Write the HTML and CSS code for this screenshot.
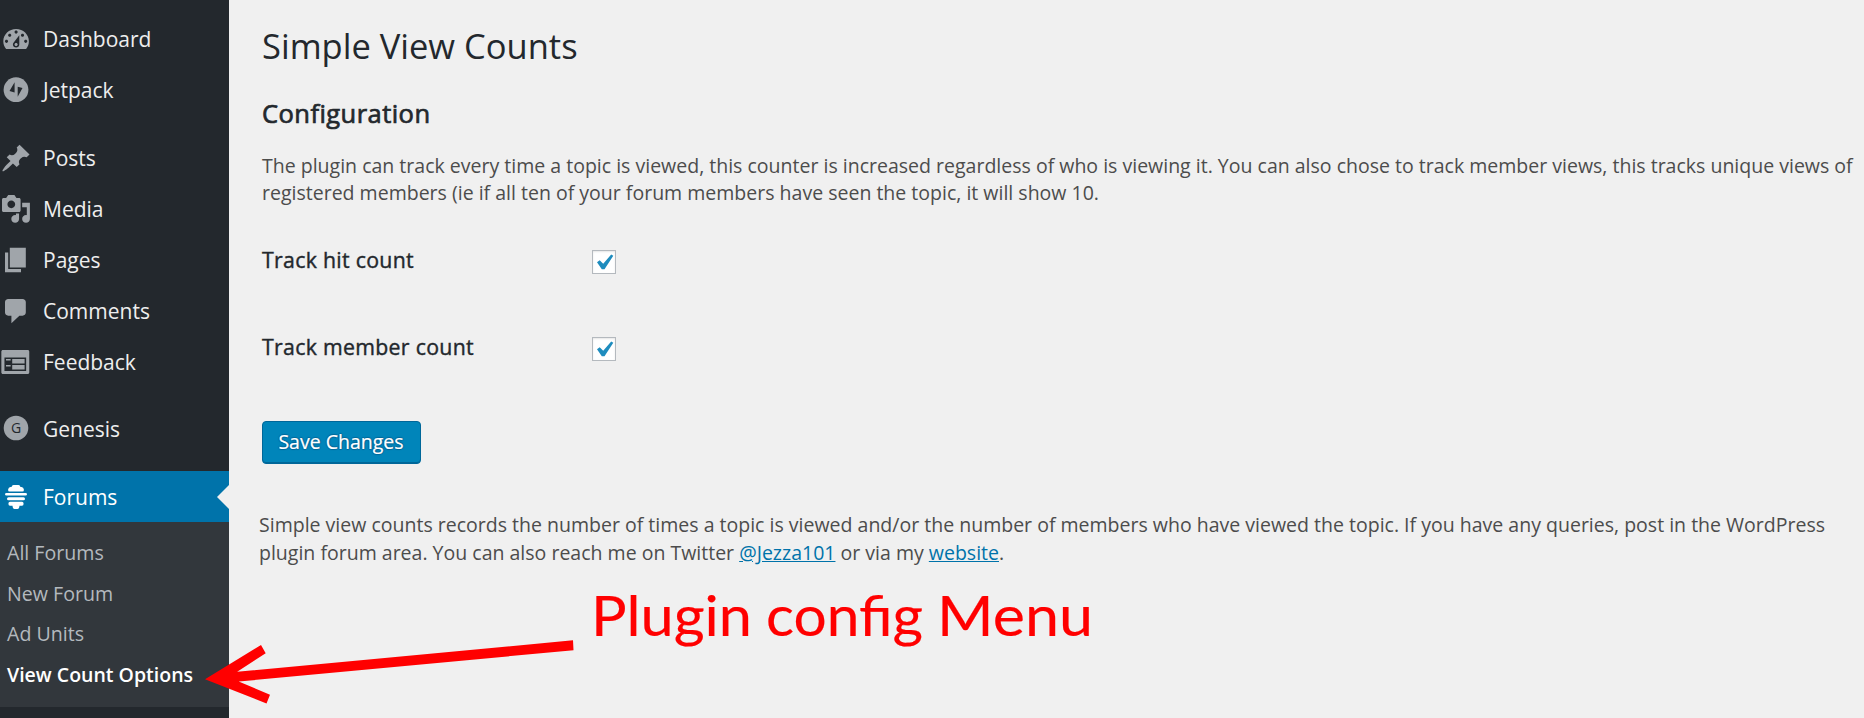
FILE: index.html
```html
<!DOCTYPE html>
<html lang="en">
<head>
<meta charset="utf-8">
<title>Simple View Counts</title>
<link rel="stylesheet" href="styles.css">
</head>
<body>
<div class="layout">
  <nav class="sidebar">
    <ul class="menu">
      <li class="item"><svg class="icon" viewBox="0 0 34 51"><path fill-rule="evenodd" transform="translate(.1 11.4) scale(1.6 1.54)" d="M3.76 16h12.48c1.1-1.37 1.76-3.11 1.76-5 0-4.42-3.58-8-8-8s-8 3.58-8 8c0 1.89.66 3.63 1.76 5zM10 4c.55 0 1 .45 1 1s-.45 1-1 1-1-.45-1-1 .45-1 1-1zM6 6c.55 0 1 .45 1 1s-.45 1-1 1-1-.45-1-1 .45-1 1-1zm8 0c.55 0 1 .45 1 1s-.45 1-1 1-1-.45-1-1 .45-1 1-1zm-5.37 5.55L12 7v6c0 1.1-.9 2-2 2s-2-.9-2-2c0-.57.24-1.08.63-1.45zM4 10c.55 0 1 .45 1 1s-.45 1-1 1-1-.45-1-1 .45-1 1-1zm12 0c.55 0 1 .45 1 1s-.45 1-1 1-1-.45-1-1 .45-1 1-1zm-5 3c0-.55-.45-1-1-1s-1 .45-1 1 .45 1 1 1 1-.45 1-1z"/></svg><span>Dashboard</span></li>
      <li class="item"><svg class="icon" viewBox="0 0 34 51"><circle cx="16" cy="25.7" r="12.4"/><path class="cut" d="M14.6 18.3v10.2l-5.1-1.6zM17.7 22.8l4.8 1.2-4.8 8.8z"/></svg><span>Jetpack</span></li>
      <li class="separator"></li>
      <li class="item"><svg class="icon" viewBox="0 0 34 51"><path transform="translate(.3 10.9) scale(1.57 1.54)" d="M10.44 3.02l1.82-1.82 6.36 6.35-1.83 1.82c-1.05-.68-2.48-.57-3.41.36l-.75.75c-.92.93-1.04 2.35-.35 3.41l-1.83 1.82-2.41-2.41-2.8 2.79c-.42.42-3.38 2.71-3.8 2.29s1.86-3.39 2.28-3.81l2.79-2.79L4.1 9.36l1.83-1.82c1.05.69 2.48.57 3.4-.36l.75-.75c.93-.92 1.05-2.35.36-3.41z"/></svg><span>Posts</span></li>
      <li class="item"><svg class="icon" viewBox="0 0 34 51"><path fill-rule="evenodd" transform="translate(.45 10.5) scale(1.55 1.54)" d="M13 11V4c0-.55-.45-1-1-1h-1.67L9 1H5L3.67 3H2c-.55 0-1 .45-1 1v7c0 .55.45 1 1 1h10c.55 0 1-.45 1-1zM7 4.5c1.38 0 2.5 1.12 2.5 2.5S8.38 9.5 7 9.5 4.5 8.38 4.5 7 5.62 4.5 7 4.5zM14 6h5v10.5c0 1.38-1.12 2.5-2.5 2.5S14 17.88 14 16.5s1.12-2.5 2.5-2.5c.17 0 .34.02.5.05V9h-3V6zm-4 8.05V13h2v3.5c0 1.38-1.12 2.5-2.5 2.5S7 17.88 7 16.5 8.12 14 9.5 14c.17 0 .34.02.5.05z"/></svg><span>Media</span></li>
      <li class="item"><svg class="icon" viewBox="0 0 34 51"><path transform="translate(.2 10.8) scale(1.6 1.52)" d="M6 15V2h10v13H6zm-1 1h8v2H3V5h2v11z"/></svg><span>Pages</span></li>
      <li class="item"><svg class="icon" viewBox="0 0 34 51"><path transform="translate(.2 10.9) scale(1.6 1.52)" d="M5 2h9c1.1 0 2 .9 2 2v7c0 1.1-.9 2-2 2h-2l-5 5v-5H5c-1.1 0-2-.9-2-2V4c0-1.1.9-2 2-2z"/></svg><span>Comments</span></li>
      <li class="item"><svg class="icon" viewBox="0 0 34 51"><path fill-rule="evenodd" transform="translate(-.2 11) scale(1.55 1.5)" d="M2 2h16c.55 0 1 .45 1 1v14c0 .55-.45 1-1 1H2c-.55 0-1-.45-1-1V3c0-.55.45-1 1-1zm15 14V7H3v9h14zM4 8v1h3V8H4zm4 0v3h8V8H8zm-4 4v1h3v-1H4zm4 0v3h8v-3H8z"/></svg><span>Feedback</span></li>
      <li class="separator short"></li>
      <li class="item"><svg class="icon" viewBox="0 0 34 51"><circle cx="16" cy="25" r="12.3"/><text class="cut letter" x="16.2" y="30" text-anchor="middle">G</text></svg><span>Genesis</span></li>
      <li class="separator"></li>
      <li class="item current"><svg class="icon" viewBox="0 0 34 51"><path transform="translate(0 1)" d="M13.5 13h5q1.500 0 2 1.900h1q2 0 2.400 2.500.3 2.200-1.600 2.200H9.700q-1.900 0-1.600-2.200.4-2.500 2.400-2.500h1q.5-1.900 2-1.900zM6.500 21h19q1.500 0 1.500 1.300t-1.500 1.300h-19Q5 23.600 5 22.300T6.500 21zM8.500 25.200h15q1.500 0 1.500 1.500t-1.500 1.500h-15q-1.500 0-1.500-1.500t1.500-1.500zM10 29.700h12q1.600 0 1.600 2t-1.600 2h-2.500q-.3 3.300-2 3.300h-3q-1.700 0-2-3.300H10q-1.600 0-1.600-2t1.600-2z"/></svg><span>Forums</span></li>
    </ul>
    <ul class="submenu">
      <li>All Forums</li>
      <li>New Forum</li>
      <li>Ad Units</li>
      <li class="active">View Count Options</li>
    </ul>
  </nav>
  <main class="content">
    <h1 class="title">Simple View Counts</h1>
    <h2 class="subtitle">Configuration</h2>
    <p class="intro">The plugin can track every time a topic is viewed, this counter is increased regardless of who is viewing it. You can also chose to track member views, this tracks unique views of<br>registered members (ie if all ten of your forum members have seen the topic, it will show 10.</p>
    <div class="field"><span class="label">Track hit count</span><span class="checkbox"><svg viewBox="0 0 24 24"><path d="M5 12.300l2.700-2 3.500 3.400 8-9.200 2.100 1.300-8.800 13.400h-2.700z"/></svg></span></div>
    <div class="field"><span class="label">Track member count</span><span class="checkbox"><svg viewBox="0 0 24 24"><path d="M5 12.300l2.700-2 3.500 3.400 8-9.200 2.100 1.300-8.800 13.400h-2.700z"/></svg></span></div>
    <button class="save" type="button">Save Changes</button>
    <p class="about">Simple view counts records the number of times a topic is viewed and/or the number of members who have viewed the topic. If you have any queries, post in the WordPress<br>plugin forum area. You can also reach me on Twitter <a href="#">@Jezza101</a> or via my <a href="#">website</a>.</p>
  </main>
  <svg class="annotation" viewBox="0 0 1864 718">
    <path d="M205 679.300L261 645l4.700 8.300-28.500 18.400L573 640.300l.5 9.900-334.800 31.300 31.300 13.200-3.500 8.700z"/>
    <text x="591" y="636" textLength="161" lengthAdjust="spacingAndGlyphs">Plugin</text>
    <text x="766" y="636" textLength="157" lengthAdjust="spacingAndGlyphs">config</text>
    <text x="937" y="636" textLength="156" lengthAdjust="spacingAndGlyphs">Menu</text>
  </svg>
</div>
</body>
</html>
```
FILE: styles.css
```css
* { box-sizing: border-box; }
body {
  margin: 0;
  background: #f0f0f0;
  color: #4c4c4c;
  font-family: "Open Sans", sans-serif;
  font-size: 19.52px;
}
.layout {
  position: relative;
  display: flex;
  width: 1864px;
  height: 718px;
  overflow: hidden;
}
.sidebar {
  flex: none;
  width: 229px;
  background: #23282d;
}
.menu, .submenu {
  margin: 0;
  padding: 0;
  list-style: none;
}
.menu { padding-top: 13px; }
.item {
  position: relative;
  display: flex;
  height: 51px;
  color: #eee;
  font-size: 21px;
  line-height: 53px;
  white-space: nowrap;
}
.icon {
  flex: none;
  width: 34px;
  height: 51px;
  margin-right: 9px;
  fill: #a0a5aa;
}
.cut { fill: #23282d; }
.letter { font: 14px "Open Sans", sans-serif; }
.separator { height: 17px; }
.short { height: 16px; }
.current {
  background: #0073aa;
  color: #fff;
}
.current .icon { fill: #fff; }
.current::after {
  content: "";
  position: absolute;
  right: 0;
  top: 14px;
  border: 12px solid transparent;
  border-left: 0;
  border-right-color: #f0f0f0;
}
.submenu {
  height: 185px;
  padding: 11px 7px 0;
  background: #32373c;
  color: #b4b9be;
  font-size: 19.6px;
  line-height: 40.7px;
  white-space: nowrap;
}
.active {
  color: #fff;
  font-size: 19.5px;
  font-weight: 600;
}
.content {
  flex: 1;
  padding: 22px 0 0 33px;
  white-space: nowrap;
}
.title, .subtitle {
  margin: 0;
  color: #23282d;
}
.title {
  font-size: 34.5px;
  font-weight: 400;
  line-height: 48px;
}
.subtitle {
  margin-top: 27px;
  font-size: 25.5px;
  font-weight: 400;
  line-height: 32px;
  letter-spacing: .45px;
  -webkit-text-stroke: .7px #23282d;
}
.intro {
  margin: 23px 0 0;
  line-height: 27px;
}
.field {
  display: flex;
  align-items: center;
  height: 87px;
}
.intro + .field { margin-top: 10px; }
.label {
  width: 330px;
  color: #23282d;
  font-size: 21.3px;
  letter-spacing: .3px;
  -webkit-text-stroke: .4px #23282d;
}
.checkbox {
  width: 24px;
  height: 24px;
  margin-top: 4px;
  border: 1px solid #b4b9be;
  background: #fff;
  box-shadow: inset 0 1px 2px rgba(0, 0, 0, .1);
}
.checkbox svg {
  display: block;
  width: 24px;
  height: 24px;
  margin: -1px;
  fill: #1e8cbe;
}
.save {
  display: block;
  width: 159px;
  height: 43px;
  margin: 31px 0 0;
  padding: 0 1px 2px 0;
  border: 1px solid #006799;
  border-radius: 4px;
  background: #0085ba;
  box-shadow: inset 0 -1px 0 #006799;
  color: #fff;
  font: 19.5px "Open Sans", sans-serif;
  text-shadow: 0 -1px 1px #006799, 1px 0 1px #006799, 0 1px 1px #006799, -1px 0 1px #006799;
  -webkit-text-stroke: .2px #fff;
}
.about {
  margin: 47px 0 0 -3px;
  line-height: 28px;
}
.about a { color: #0073aa; }
.annotation {
  position: absolute;
  left: 0;
  top: 0;
  width: 1864px;
  height: 718px;
  fill: #f00;
  font: 57px Lato, sans-serif;
  pointer-events: none;
}
.annotation text {
  stroke: #f00;
  stroke-width: .2px;
}
```
